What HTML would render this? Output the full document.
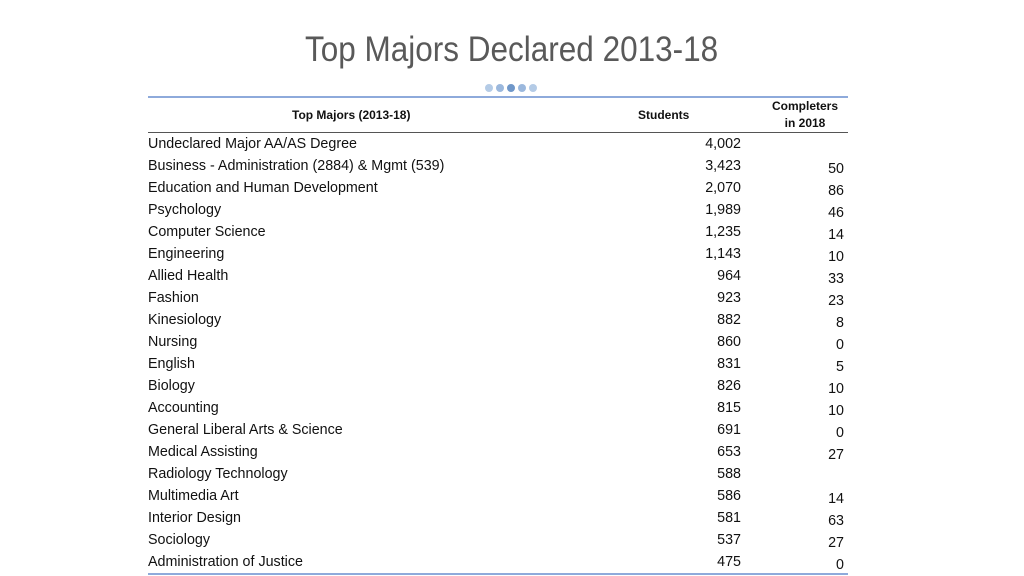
<!DOCTYPE html>
<html><head><meta charset="utf-8"><style>
html,body{margin:0;padding:0;background:#fff;}
body{width:1024px;height:576px;position:relative;overflow:hidden;font-family:"Liberation Sans",sans-serif;color:#111;}
.t{position:absolute;left:0;width:1024px;top:30px;text-align:center;font-size:35px;color:#595959;}
.t span{display:inline-block;transform:scaleX(0.9);}
.dot{position:absolute;top:84px;width:8px;height:8px;border-radius:50%;}
.ln{position:absolute;left:148px;width:700px;}
.c{position:absolute;font-size:14.3px;line-height:16px;white-space:nowrap;}
.n{left:148px;}
.s{right:283px;text-align:right;}
.p{right:180px;text-align:right;}
.h{position:absolute;font-size:12px;font-weight:bold;line-height:17px;}
</style></head><body>
<div class="t"><span>Top Majors Declared 2013-18</span></div>
<div class="dot" style="left:485px;background:#b4cbe6"></div>
<div class="dot" style="left:496px;background:#9bb8dd"></div>
<div class="dot" style="left:507px;background:#6f97c9"></div>
<div class="dot" style="left:518px;background:#9bb8dd"></div>
<div class="dot" style="left:529px;background:#b4cbe6"></div>
<div class="ln" style="top:96px;height:2px;background:#8eaadb"></div>
<div class="ln" style="top:132px;height:1px;background:#555"></div>
<div class="ln" style="top:573px;height:2px;background:#8eaadb"></div>
<div class="h" style="left:292px;top:107px">Top Majors (2013-18)</div>
<div class="h" style="left:638px;top:107px">Students</div>
<div class="h" style="left:769px;top:98px;text-align:center;width:72px">Completers<br>in 2018</div>
<div id="rows"></div>
<script>
var d=[["Undeclared Major AA/AS Degree","4,002",""],["Business - Administration (2884) & Mgmt (539)","3,423","50"],["Education and Human Development","2,070","86"],["Psychology","1,989","46"],["Computer Science","1,235","14"],["Engineering","1,143","10"],["Allied Health","964","33"],["Fashion","923","23"],["Kinesiology","882","8"],["Nursing","860","0"],["English","831","5"],["Biology","826","10"],["Accounting","815","10"],["General Liberal Arts & Science","691","0"],["Medical Assisting","653","27"],["Radiology Technology","588",""],["Multimedia Art","586","14"],["Interior Design","581","63"],["Sociology","537","27"],["Administration of Justice","475","0"]];
var h="";
d.forEach(function(r,i){var y=136+22*i;
h+='<div class="c n" style="top:'+y+'px">'+r[0].replace("&","&amp;")+'</div><div class="c s" style="top:'+y+'px">'+r[1]+'</div><div class="c p" style="top:'+(y+3)+'px">'+r[2]+'</div>';});
document.getElementById("rows").innerHTML=h;
</script>
</body></html>
